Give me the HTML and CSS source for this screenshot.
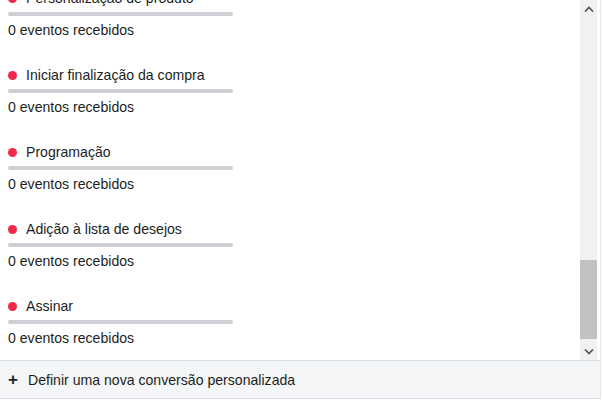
FILE: index.html
```html
<!DOCTYPE html>
<html lang="pt">
<head>
<meta charset="utf-8">
<link rel="stylesheet" href="styles.css">
</head>
<body>
<div class="panel">
  <div class="scroll-area">
    <div class="viewport">
      <ul class="list">
        <li class="item">
          <div class="title"><span class="dot"></span>Personalização de produto</div>
          <div class="bar"></div>
          <div class="count">0 eventos recebidos</div>
        </li>
        <li class="item">
          <div class="title"><span class="dot"></span>Iniciar finalização da compra</div>
          <div class="bar"></div>
          <div class="count">0 eventos recebidos</div>
        </li>
        <li class="item">
          <div class="title"><span class="dot"></span>Programação</div>
          <div class="bar"></div>
          <div class="count">0 eventos recebidos</div>
        </li>
        <li class="item">
          <div class="title"><span class="dot"></span>Adição à lista de desejos</div>
          <div class="bar"></div>
          <div class="count">0 eventos recebidos</div>
        </li>
        <li class="item">
          <div class="title"><span class="dot"></span>Assinar</div>
          <div class="bar"></div>
          <div class="count">0 eventos recebidos</div>
        </li>
      </ul>
    </div>
    <div class="scrollbar">
      <div class="arrow">
        <svg width="10" height="6" viewBox="0 0 10 6"><path d="M1 5.5 L5 1.5 L9 5.5" fill="none" stroke="#505050" stroke-width="1.6"/></svg>
      </div>
      <div class="track">
        <div class="thumb"></div>
      </div>
      <div class="arrow">
        <svg width="10" height="6" viewBox="0 0 10 6"><path d="M1 0.5 L5 4.5 L9 0.5" fill="none" stroke="#505050" stroke-width="1.6"/></svg>
      </div>
    </div>
  </div>
  <div class="footer">
    <span class="plus">+</span>
    <span class="footer-text">Definir uma nova conversão personalizada</span>
  </div>
</div>
</body>
</html>
```

FILE: styles.css
```css
html, body {
  margin: 0;
  padding: 0;
  background: #ffffff;
}

body {
  font-family: "Liberation Sans", Arial, sans-serif;
  font-size: 14.1px;
  color: #1c1e21;
}

.panel {
  width: 600px;
  border-right: 1px solid #e4e6e9;
}

.scroll-area {
  display: flex;
  height: 360px;
}

.viewport {
  flex: 1;
  overflow: hidden;
}

.list {
  list-style: none;
  margin: -10px 0 0 0;
  padding: 0 0 0 8px;
}

.item {
  display: flex;
  flex-direction: column;
  padding-bottom: 29px;
}

.title {
  display: flex;
  align-items: center;
  height: 16px;
  line-height: 16px;
}

.dot {
  width: 9px;
  height: 9px;
  border-radius: 50%;
  background: #f02849;
  margin-right: 9px;
  flex: none;
}

.bar {
  width: 225px;
  height: 4px;
  border-radius: 2px;
  background: #ccd0d5;
  margin-top: 6px;
}

.count {
  height: 16px;
  line-height: 16px;
  margin-top: 6px;
}

.scrollbar {
  width: 17px;
  margin-right: 3px;
  background: #f1f1f1;
  display: flex;
  flex-direction: column;
}

.arrow {
  height: 17px;
  display: flex;
  align-items: center;
  justify-content: center;
}

.track {
  flex: 1;
  display: flex;
  flex-direction: column;
  justify-content: flex-end;
  padding-bottom: 4px;
}

.thumb {
  height: 79px;
  background: #c1c1c1;
}

.footer {
  display: flex;
  align-items: center;
  height: 37px;
  border-top: 1px solid #dadde1;
  border-bottom: 1px solid #dadde1;
  background: #f5f6f7;
  padding-left: 8px;
}

.plus {
  font-weight: bold;
  font-size: 17px;
  width: 20px;
  line-height: 16px;
}

.footer-text {
  line-height: 16px;
}
```
